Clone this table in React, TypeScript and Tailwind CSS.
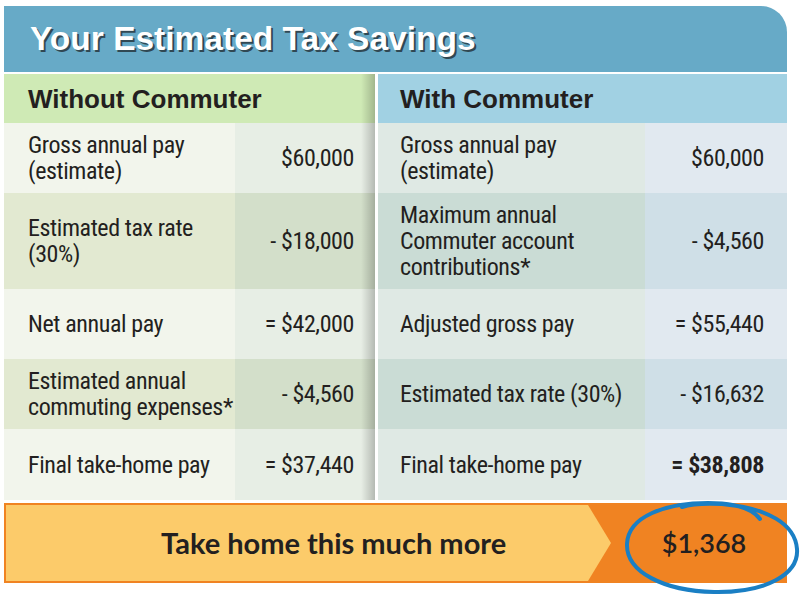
const cond = "font-['Roboto_Condensed','Liberation_Sans',sans-serif] tracking-[-0.4px]";

type Row = { label: string[]; value: string; h: string; bold?: boolean };

const leftRows: Row[] = [
  { label: ["Gross annual pay", "(estimate)"], value: "$60,000", h: "h-[70px]" },
  { label: ["Estimated tax rate", "(30%)"], value: "- $18,000", h: "h-[96px]" },
  { label: ["Net annual pay"], value: "= $42,000", h: "h-[70px]" },
  { label: ["Estimated annual", "commuting expenses*"], value: "- $4,560", h: "h-[70px]" },
  { label: ["Final take-home pay"], value: "= $37,440", h: "h-[71px]" },
];

const rightRows: Row[] = [
  { label: ["Gross annual pay", "(estimate)"], value: "$60,000", h: "h-[70px]" },
  { label: ["Maximum annual", "Commuter account", "contributions*"], value: "- $4,560", h: "h-[96px]" },
  { label: ["Adjusted gross pay"], value: "= $55,440", h: "h-[70px]" },
  { label: ["Estimated tax rate (30%)"], value: "- $16,632", h: "h-[70px]" },
  { label: ["Final take-home pay"], value: "= $38,808", h: "h-[71px]", bold: true },
];

function Column({
  title,
  rows,
  headBg,
  labelBg,
  valueBg,
  labelW,
  padL,
  padR,
  shadow,
}: {
  title: string;
  rows: Row[];
  headBg: string;
  labelBg: [string, string];
  valueBg: [string, string];
  labelW: string;
  padL: string;
  padR: string;
  shadow?: boolean;
}) {
  return (
    <div className="relative flex flex-col">
      <div className={`h-[49px] flex items-center ${padL} ${headBg}`}>
        <span className="font-['Liberation_Sans',Arial,sans-serif] font-bold text-[26px] text-[#231f20] leading-none">
          {title}
        </span>
      </div>
      {rows.map((r, i) => (
        <div key={i} className={`flex ${r.h}`}>
          <div
            className={`${labelW} shrink-0 flex items-center ${padL} ${labelBg[i % 2]} ${cond} text-[24px] leading-[26px] text-[#231f20] whitespace-nowrap`}
          >
            <div>
              {r.label.map((l, j) => (
                <div key={j}>{l}</div>
              ))}
            </div>
          </div>
          <div
            className={`flex-1 flex items-center justify-end ${padR} ${valueBg[i % 2]} ${cond} text-[24px] text-[#231f20] whitespace-nowrap ${
              r.bold ? "font-bold" : ""
            }`}
          >
            {r.value}
          </div>
        </div>
      ))}
      {shadow && (
        <div className="absolute top-0 right-0 bottom-0 w-[14px] bg-gradient-to-r from-transparent to-[rgba(0,0,0,0.22)]" />
      )}
    </div>
  );
}

export default function App() {
  return (
    <div className="w-[800px] h-[608px] bg-white pt-[6px] pl-[4px]">
      <div className="relative w-[783px]">
        <div className="h-[66px] bg-[#67aac7] rounded-tr-[26px] flex items-center pl-[26px]">
          <h1 className="font-['Liberation_Sans',Arial,sans-serif] font-bold text-[33.5px] leading-none text-white [text-shadow:2px_2px_0_rgba(30,40,45,0.75)]">
            Your Estimated Tax Savings
          </h1>
        </div>
        <div className="mt-[2px] grid grid-cols-[371px_409px] gap-x-[3px]">
          <Column
            title="Without Commuter"
            rows={leftRows}
            headBg="bg-[#cfeab5]"
            labelBg={["bg-[#f2f5ec]", "bg-[#e2e9d1]"]}
            valueBg={["bg-[#e7eee5]", "bg-[#d3dfca]"]}
            labelW="w-[231px]"
            padL="pl-[24px]"
            padR="pr-[21px]"
            shadow
          />
          <Column
            title="With Commuter"
            rows={rightRows}
            headBg="bg-[#a1d1e3]"
            labelBg={["bg-[#dfe9e4]", "bg-[#cadcd5]"]}
            valueBg={["bg-[#e1e9f0]", "bg-[#cfdfe7]"]}
            labelW="w-[267px]"
            padL="pl-[22px]"
            padR="pr-[23px]"
          />
        </div>
        <div className="mt-[3px] h-[80px] border-2 border-[#f08322] bg-[#f08322] flex">
          <div className="w-[605px] h-full bg-[#fccb6a] [clip-path:polygon(0_0,calc(100%-23px)_0,100%_50%,calc(100%-23px)_100%,0_100%)] flex items-center pl-[155px]">
            <span className="font-['Lato',sans-serif] font-bold text-[29px] text-[#231f20]">
              Take home this much more
            </span>
          </div>
          <div className="flex-1 flex items-center justify-center pl-[12px]">
            <span className="font-['Lato',sans-serif] font-semibold text-[27px] text-[#231f20]">
              $1,368
            </span>
          </div>
        </div>
        <svg
          className="absolute left-[612px] top-[488px] pointer-events-none"
          width="188"
          height="110"
          viewBox="0 0 188 110"
          fill="none"
        >
          <path
            d="M144 25 C136 14 118 9 92 9 C50 9 12 22 11 50 C10 78 48 97 98 98 C150 99 183 80 181 55 C179 30 152 14 106 10 C86 9 72 11 66 13"
            stroke="#1a7fc4"
            strokeWidth="4"
            strokeLinecap="round"
          />
        </svg>
      </div>
    </div>
  );
}
